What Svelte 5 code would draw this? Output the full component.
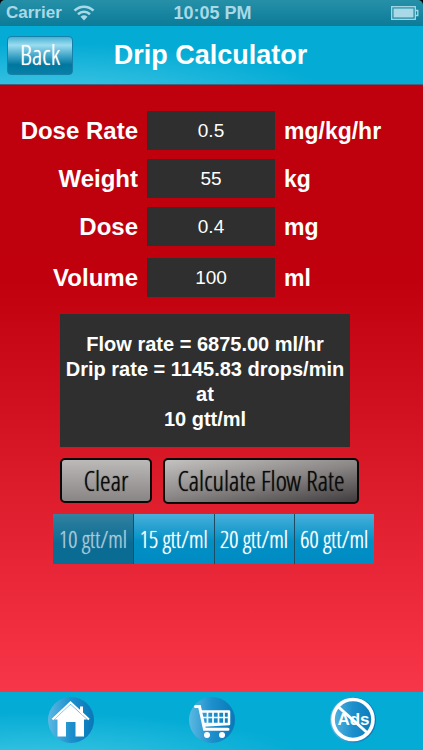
<script>
  const fields = $state([
    { id: 'rate', label: 'Dose Rate', unit: 'mg/kg/hr', value: '0.5' },
    { id: 'weight', label: 'Weight', unit: 'kg', value: '55' },
    { id: 'dose', label: 'Dose', unit: 'mg', value: '0.4' },
    { id: 'volume', label: 'Volume', unit: 'ml', value: '100' }
  ]);
  const sets = [10, 15, 20, 60];
  let drops = $state(10);
  let flow = $state(6875);

  function calculate() {
    const [rate, weight, dose, volume] = fields.map((f) => Number(f.value));
    flow = dose ? (rate * weight * volume) / dose : 0;
  }

  function clear() {
    for (const f of fields) f.value = '';
    flow = 0;
  }
</script>

<div class="app">
  <div class="status">
    <span class="carrier">
      Carrier
      <svg width="22" height="16" viewBox="0 0 22 16" aria-hidden="true">
        <g fill="none" stroke="currentColor" stroke-width="2.6">
          <path d="M1.5 5.6C7 .4 15 .4 20.500 5.600" />
          <path d="M5 9.200c3.500-3.200 8.500-3.200 12 0" />
        </g>
        <path d="M7.500 11.700c2-1.800 5-1.800 7 0L11 15.400z" fill="currentColor" />
      </svg>
    </span>
    <span>10:05 PM</span>
    <svg class="battery" width="28" height="14" viewBox="0 0 28 14" aria-hidden="true">
      <rect x=".7" y=".7" width="23.600" height="12.600" fill="none" stroke="currentColor" stroke-width="1.300" />
      <rect x="2.500" y="2.500" width="20" height="9" fill="currentColor" />
      <path d="M24.500 4.500h2.300v5h-2.300" fill="none" stroke="currentColor" stroke-width="1.300" />
    </svg>
  </div>

  <header>
    <button class="back" type="button">Back</button>
    <h1>Drip Calculator</h1>
  </header>

  <main>
    <div class="form">
      {#each fields as f (f.id)}
        <div class="row">
          <label for={f.id}>{f.label}</label>
          <input id={f.id} inputmode="decimal" bind:value={f.value} />
          <span class="unit">{f.unit}</span>
        </div>
      {/each}
    </div>

    <div class="panel">
      <output class="result">
        <span>Flow rate = {flow.toFixed(2)} ml/hr</span>
        <span>Drip rate = {((flow * drops) / 60).toFixed(2)} drops/min</span>
        <span>at</span>
        <span>{drops} gtt/ml</span>
      </output>
      <div class="actions">
        <button class="clear" type="button" onclick={clear}>Clear</button>
        <button class="calc" type="button" onclick={calculate}>Calculate Flow Rate</button>
      </div>
      <div class="sets">
        {#each sets as n (n)}
          <button type="button" class:active={drops === n} aria-pressed={drops === n} onclick={() => (drops = n)}>{n} gtt/ml</button>
        {/each}
      </div>
    </div>
  </main>

  <nav>
    <a href="#home" aria-label="Home">
      <svg width="46" height="46" viewBox="0 0 46 46">
        <defs>
          <linearGradient id="disc" x1="0" y1="0" x2="1" y2="0">
            <stop offset="0" stop-color="#5cb9e2" />
            <stop offset=".5" stop-color="#1c8fcc" />
            <stop offset="1" stop-color="#0878b8" />
          </linearGradient>
        </defs>
        <circle cx="23" cy="23" r="23" fill="url(#disc)" />
        <path d="M4.500 22.500 22.500 5.500 41 22.500" fill="none" stroke="#fff" stroke-width="2.200" />
        <path d="M32 9.500h3v9l-3-3z" fill="#fff" />
        <path d="M6.500 22.500 22.500 7.500l16.500 15H36V39.500h-8.500V25h-9.500v14.500H9.500v-17z" fill="#fff" />
      </svg>
    </a>
    <a href="#cart" aria-label="Cart">
      <svg width="46" height="46" viewBox="0 0 46 46">
        <circle cx="23" cy="23" r="23" fill="url(#disc)" />
        <g fill="none" stroke="#fff">
          <path d="M6.500 9.500h4L15.500 32.300H39" stroke-width="3" stroke-linecap="round" />
          <path d="M12 14.500H40V27L14 28.500" stroke-width="2.500" stroke-linejoin="round" />
          <path d="M13 20.500h27M18.500 14.500v13M24 14.500v13M29.500 14.500v13M35 14.500v13M14 26.500h26" stroke-width="1.700" />
        </g>
        <circle cx="18" cy="38" r="3" fill="#fff" />
        <circle cx="33" cy="38" r="3" fill="#fff" />
      </svg>
    </a>
    <a class="ads" href="#ads" aria-label="Remove Ads">
      <svg width="46" height="46" viewBox="0 0 46 46">
        <circle cx="23" cy="23" r="23" fill="url(#disc)" />
        <circle cx="23" cy="22.500" r="20" fill="none" stroke="#fff" stroke-width="3.600" />
        <path d="M8.500 10 37.500 36" stroke="#fff" stroke-width="3" />
        <text x="23.500" y="28" text-anchor="middle">Ads</text>
      </svg>
    </a>
  </nav>
</div>

<style>
  .app {
    min-height: 100vh;
    display: flex;
    flex-direction: column;
    background: #000;
    color: #fff;
    font-family: 'Liberation Sans', Arial, sans-serif;
  }
  button,
  input {
    margin: 0;
    padding: 0;
    border: 0;
    color: inherit;
    font-family: inherit;
  }
  .status {
    box-sizing: border-box;
    height: 26px;
    padding: 0 4px 0 6px;
    display: grid;
    grid-template-columns: 1fr auto 1fr;
    align-items: center;
    border-radius: 5px 5px 0 0;
    background: linear-gradient(#2690a8, #0c7b98);
    color: #a9d9e6;
    font-size: 18px;
    font-weight: bold;
    line-height: 26px;
  }
  .carrier {
    display: flex;
    align-items: center;
    gap: 11px;
    font-size: 17px;
  }
  .battery {
    justify-self: end;
  }
  header {
    box-sizing: border-box;
    height: 59px;
    padding: 0 7px;
    display: grid;
    grid-template-columns: 66px 1fr 68px;
    align-items: center;
    border-bottom: 1px solid #4b6078;
    background: radial-gradient(ellipse at 10% 130%, #49c9e6 0%, #04abd5 55%);
  }
  h1 {
    margin: 0;
    font-size: 27px;
    line-height: 32px;
    text-align: center;
    white-space: nowrap;
  }
  .back,
  .clear,
  .calc,
  .sets button {
    font-family: 'Open Sans Condensed Light', 'Open Sans Condensed', 'Noto Sans', sans-serif;
    font-weight: 300;
    text-shadow: 0 0 1px currentColor;
    white-space: nowrap;
  }
  .back {
    height: 39px;
    border: 1px solid #1580a8;
    border-radius: 4px;
    background: linear-gradient(#4aafd2 0%, #9bdcf0 22%, #3da3c6 52%, #00779f 75%, #087fa7 100%);
    font-size: 27px;
    line-height: 36px;
  }
  main {
    flex: 1;
    padding: 26px 0;
    background: linear-gradient(#bf000d 0%, #c0000d 32%, #f83649 100%);
  }
  .form {
    display: flex;
    flex-direction: column;
    gap: 9px;
  }
  .row {
    display: grid;
    grid-template-columns: 1fr 128px 1fr;
    column-gap: 9px;
    align-items: center;
    padding-right: 1px;
    font-size: 24px;
    font-weight: bold;
    line-height: 39px;
  }
  .row:last-child {
    margin-top: 3px;
  }
  .row label {
    text-align: right;
  }
  .unit {
    padding-top: 1px;
    font-size: 23px;
    line-height: 38px;
  }
  input {
    width: 100%;
    height: 39px;
    box-sizing: border-box;
    border-radius: 0;
    background: #2f2f2f;
    font-size: 19px;
    text-align: center;
  }
  .panel {
    width: 321px;
    margin: 17px auto 0;
    padding-left: 4px;
  }
  .result {
    box-sizing: border-box;
    width: 290px;
    height: 133px;
    margin-left: 7px;
    padding-top: 3px;
    display: flex;
    flex-direction: column;
    align-items: center;
    justify-content: center;
    background: #2f2f2f;
    font-size: 20px;
    font-weight: bold;
    line-height: 25px;
    white-space: nowrap;
  }
  .actions {
    margin: 11px 0 10px 7px;
    display: flex;
    align-items: flex-start;
    gap: 11px;
  }
  .clear,
  .calc {
    border: 2px solid #0c0808;
    border-radius: 5px;
    color: #0b0b0b;
    font-size: 27px;
    line-height: 36px;
  }
  .clear {
    width: 92px;
    height: 45px;
    background: linear-gradient(#bcb9b9, #8a8585);
  }
  .calc {
    width: 196px;
    height: 46px;
    background: linear-gradient(170deg, #c4c1c1 0%, #8b8787 50%, #403c3d 100%);
  }
  .sets {
    display: grid;
    grid-template-columns: repeat(4, 1fr);
  }
  .sets button {
    height: 50px;
    background: linear-gradient(#49b0db 0%, #0190c5 55%, #008bc3 100%);
    font-size: 23px;
  }
  .sets button + button {
    border-left: 1px solid #1d4d62;
  }
  .sets .active {
    background: linear-gradient(#32819f, #0a6b93 60%);
    color: #a8c9d6;
  }
  nav {
    box-sizing: border-box;
    height: 58px;
    padding-top: 5px;
    display: grid;
    grid-template-columns: repeat(3, 1fr);
    justify-items: center;
    background: radial-gradient(ellipse at 8% 120%, #3cc6e2 0%, #04abd5 50%);
  }
  nav a,
  nav svg {
    display: block;
    height: 46px;
  }
  .ads text {
    fill: #fff;
    font-size: 17px;
    font-weight: bold;
  }
</style>
